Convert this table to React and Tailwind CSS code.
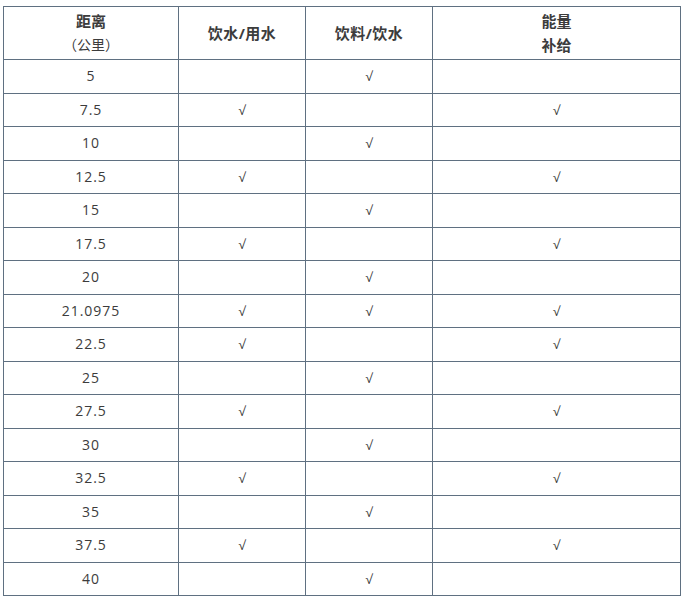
const rows = [
  ["5", "", "√", ""],
  ["7.5", "√", "", "√"],
  ["10", "", "√", ""],
  ["12.5", "√", "", "√"],
  ["15", "", "√", ""],
  ["17.5", "√", "", "√"],
  ["20", "", "√", ""],
  ["21.0975", "√", "√", "√"],
  ["22.5", "√", "", "√"],
  ["25", "", "√", ""],
  ["27.5", "√", "", "√"],
  ["30", "", "√", ""],
  ["32.5", "√", "", "√"],
  ["35", "", "√", ""],
  ["37.5", "√", "", "√"],
  ["40", "", "√", ""],
]

export default function App() {
  const cell = "border border-[#5f7081] text-center align-middle p-0"
  return (
    <div
      className="w-[687px] h-[613px] bg-white pt-[6px] pl-[3px] text-[#3c3c3c]"
      style={{ fontFamily: '"Open Sans", "Noto Sans CJK SC", sans-serif' }}
    >
      <table className="border-collapse table-fixed w-[677px] text-[14px] leading-[24px]">
        <colgroup>
          <col className="w-[175px]" />
          <col className="w-[127px]" />
          <col className="w-[127px]" />
          <col className="w-[248px]" />
        </colgroup>
        <thead>
          <tr className="h-[53px] font-bold text-[15px]">
            <th className={cell}>
              <div>距离</div>
              <div className="font-normal text-[14px]">（公里）</div>
            </th>
            <th className={cell + " tracking-[0.5px]"}>饮水/用水</th>
            <th className={cell + " tracking-[0.5px]"}>饮料/饮水</th>
            <th className={cell}>
              <div>能量</div>
              <div>补给</div>
            </th>
          </tr>
        </thead>
        <tbody>
          {rows.map((r, i) => (
            <tr key={i} className="h-[33.5px]">
              <td className={cell + " tracking-[1px]"}>{r[0]}</td>
              <td className={cell + " text-[13px]"}>{r[1]}</td>
              <td className={cell + " text-[13px]"}>{r[2]}</td>
              <td className={cell + " text-[13px]"}>{r[3]}</td>
            </tr>
          ))}
        </tbody>
      </table>
    </div>
  )
}
